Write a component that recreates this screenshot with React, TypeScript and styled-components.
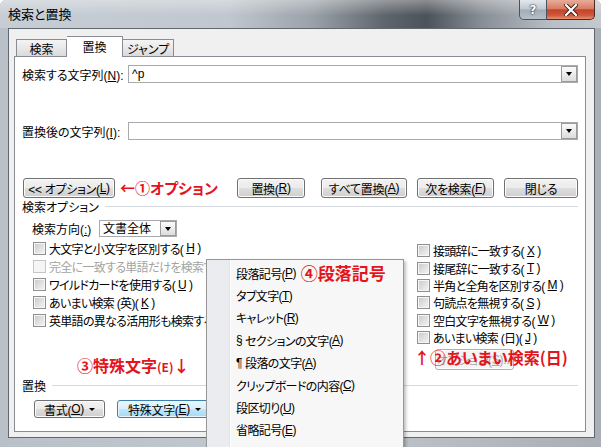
import React from "react";
import styled, { createGlobalStyle, css } from "styled-components";

const GlobalStyle = createGlobalStyle`
  html, body {
    margin: 0;
    padding: 0;
    background: #ffffff;
  }
  body {
    font-family: "Liberation Sans", "Noto Sans CJK JP", sans-serif;
    font-size: 12px;
    color: #000;
    font-feature-settings: "palt";
  }
  * {
    box-sizing: border-box;
  }
`;

const RED = "#e3141c";

const Window = styled.div`
  position: relative;
  width: 601px;
  height: 447px;
  overflow: hidden;
  display: flex;
  flex-direction: column;
  border-radius: 6px 6px 0 0;
  background: linear-gradient(90deg, #b9c0c7 0%, #c3c9cf 50%, #a9afb5 100%);
`;

const TitleBar = styled.div`
  height: 28px;
  flex: none;
  display: flex;
  align-items: flex-start;
  background:
    linear-gradient(180deg, rgba(255, 255, 255, 0.35) 0%, rgba(255, 255, 255, 0) 55%),
    linear-gradient(90deg, #c6cdd4 0%, #c0c7ce 38%, #9aa1a8 52%, #5f656c 64%, #4c5259 71%, #878d94 80%, #b9bfc5 92%, #c4c9ce 100%);
`;

const Title = styled.div`
  margin: 6px 0 0 8px;
  font-family: "Noto Sans CJK JP", sans-serif;
  font-size: 13px;
  line-height: 16px;
`;

const CaptionButtons = styled.div`
  margin-left: auto;
  margin-right: 6px;
  display: flex;
  height: 20px;
`;

const CaptionButton = styled.div<{ $close?: boolean }>`
  width: ${(p) => (p.$close ? 48 : 28)}px;
  height: 20px;
  display: flex;
  align-items: center;
  justify-content: center;
  border: 1px solid ${(p) => (p.$close ? "#4e2a22" : "#4a535c")};
  border-top: none;
  ${(p) =>
    p.$close
      ? css`
          border-radius: 0 0 5px 0;
          border-left: none;
          background: linear-gradient(180deg, #e8ab9c 0%, #d97c64 45%, #c4432a 52%, #cf563c 80%, #e3936f 100%);
        `
      : css`
          border-radius: 0 0 0 5px;
          background: linear-gradient(180deg, #e2e7ec 0%, #bfc7cf 48%, #a2acb6 52%, #b6c0ca 100%);
        `}
  color: #fff;
  font-family: "DejaVu Sans", sans-serif;
  font-weight: bold;
  font-size: 12px;
  text-shadow: 0 0 2px #222, 0 0 1px #222;
`;

const FrameBody = styled.div`
  flex: 1;
  display: flex;
  padding: 0 6px 9px 8px;
`;

const Client = styled.div`
  flex: 1;
  display: flex;
  flex-direction: column;
  background: #f0f0f0;
  border: 1px solid #5f6871;
  padding: 0 8px 5px 5px;
`;

const TabsRow = styled.div`
  height: 27px;
  flex: none;
  display: flex;
  align-items: flex-end;
  padding-left: 2px;
  position: relative;
  z-index: 1;
`;

const Tab = styled.div<{ $active?: boolean; $w: number }>`
  width: ${(p) => p.$w}px;
  display: flex;
  align-items: center;
  justify-content: center;
  border: 1px solid #898c95;
  border-bottom: none;
  ${(p) =>
    p.$active
      ? css`
          height: 21px;
          margin-bottom: -1px;
          background: #ffffff;
          padding-bottom: 2px;
        `
      : css`
          height: 17px;
          background: linear-gradient(180deg, #f4f4f4 0%, #e8e8e8 50%, #dadada 100%);
          padding-top: 1px;
        `}
  & + & {
    border-left: none;
  }
`;

const Panel = styled.div`
  flex: 1;
  display: flex;
  flex-direction: column;
  background: #ffffff;
  border: 1px solid #898c95;
  padding: 0 7px;
`;

const FieldRow = styled.div<{ $top: number }>`
  display: flex;
  align-items: center;
  margin-top: ${(p) => p.$top}px;
  height: 18px;
`;

const FieldLabel = styled.div<{ $w: number; $indent?: number }>`
  width: ${(p) => p.$w}px;
  margin-left: ${(p) => p.$indent ?? 0}px;
  flex: none;
  white-space: nowrap;
`;

const Combo = styled.div<{ $w?: number }>`
  ${(p) => (p.$w ? `width: ${p.$w}px; flex: none;` : "flex: 1;")}
  height: 100%;
  display: flex;
  align-items: center;
  border: 1px solid #a7abb0;
  background: #fff;
  padding: 0 0 0 3px;
  line-height: 14px;
`;

const ComboText = styled.span`
  flex: 1;
  white-space: nowrap;
`;

const DropArrow = styled.div`
  width: 16px;
  height: 100%;
  flex: none;
  display: flex;
  align-items: center;
  justify-content: center;
  border: 1px solid #9b9b9b;
  background: linear-gradient(180deg, #fbfbfb 0%, #ececec 50%, #dcdcdc 100%);
  &::after {
    content: "";
    border-left: 3.5px solid transparent;
    border-right: 3.5px solid transparent;
    border-top: 4px solid #000;
  }
`;

const ButtonRow = styled.div`
  display: flex;
  align-items: center;
  margin-top: 38px;
  height: 20px;
`;

const Button = styled.div<{ $w: number; $h?: number; $ml?: number; $hot?: boolean; $disabled?: boolean }>`
  width: ${(p) => p.$w}px;
  height: ${(p) => p.$h ?? 20}px;
  margin-left: ${(p) => (p.$ml === undefined ? 0 : p.$ml)}px;
  flex: none;
  display: flex;
  align-items: center;
  justify-content: center;
  white-space: nowrap;
  letter-spacing: -0.3px;
  border-radius: 3px;
  border: 1px solid ${(p) => (p.$hot ? "#3c7fb1" : p.$disabled ? "#adb2b5" : "#707070")};
  box-shadow: inset 0 0 0 1px ${(p) => (p.$hot ? "#eaf6fd" : "#fcfcfc")};
  color: ${(p) => (p.$disabled ? "#a8a8a8" : "#000")};
  background: ${(p) =>
    p.$hot
      ? "linear-gradient(180deg, #eaf6fd 0%, #d9f0fc 50%, #bee6fd 51%, #a7d9f5 100%)"
      : p.$disabled
      ? "#f4f4f4"
      : "linear-gradient(180deg, #f2f2f2 0%, #ebebeb 50%, #dddddd 51%, #cfcfcf 100%)"};
`;

const SplitMark = styled.span`
  margin-left: 5px;
  border-left: 3px solid transparent;
  border-right: 3px solid transparent;
  border-top: 3px solid #000;
`;

const Note = styled.span<{ $size: number; $ml?: number }>`
  color: ${RED};
  font-family: "Noto Sans CJK JP", sans-serif;
  font-weight: bold;
  font-size: ${(p) => p.$size}px;
  line-height: 20px;
  letter-spacing: 0;
  white-space: nowrap;
  margin-left: ${(p) => p.$ml ?? 0}px;
`;

const SmallNote = styled.span`
  font-size: 12px;
`;

const GroupHeader = styled.div<{ $top: number }>`
  display: flex;
  align-items: center;
  height: 14px;
  margin-top: ${(p) => p.$top}px;
  white-space: nowrap;
  &::after {
    content: "";
    flex: 1;
    height: 1px;
    margin-left: 6px;
    background: #d5dbe0;
  }
`;

const Columns = styled.div`
  display: flex;
  height: 137px;
  margin-top: 2px;
`;

const LeftCol = styled.div`
  width: 384px;
  margin-left: 11px;
  display: flex;
  flex-direction: column;
`;

const RightCol = styled.div`
  position: relative;
  flex: 1;
  padding-top: 3px;
  display: flex;
  flex-direction: column;
`;

const CheckRow = styled.div<{ $h: number; $disabled?: boolean }>`
  height: ${(p) => p.$h}px;
  display: flex;
  align-items: center;
  gap: 3px;
  white-space: nowrap;
  letter-spacing: -0.7px;
  color: ${(p) => (p.$disabled ? "#a3a3a3" : "#000")};
`;

const Box = styled.span<{ $disabled?: boolean }>`
  width: 13px;
  height: 13px;
  flex: none;
  border: 1px solid ${(p) => (p.$disabled ? "#c6c6c6" : "#8e8f8f")};
  box-shadow: inset 0 0 0 1px #f6f6f6;
  background: ${(p) =>
    p.$disabled ? "#f5f5f5" : "linear-gradient(135deg, #c9c9c9 0%, #dfdfdf 50%, #f5f5f5 100%)"};
`;

const NoteLine = styled.div`
  margin-top: 26px;
  margin-left: 44px;
  height: 20px;
  display: flex;
  align-items: center;
`;

const FloatingNote = styled.div`
  position: absolute;
  left: -3px;
  top: 108px;
  height: 20px;
  display: flex;
  align-items: center;
`;

const BottomRow = styled.div`
  display: flex;
  align-items: center;
  margin-top: 8px;
`;

const Menu = styled.div`
  position: absolute;
  left: 206px;
  top: 259px;
  width: 198px;
  height: 200px;
  padding: 2px 2px 0 2px;
  border: 1px solid #979797;
  background: linear-gradient(90deg, #eaecef 0px, #eaecef 22px, #e1e3e5 22px, #e1e3e5 23px, #ffffff 23px, #ffffff 24px, #f7f7f7 24px);
  box-shadow: 2px 2px 3px rgba(0, 0, 0, 0.25);
  z-index: 5;
`;

const MenuItem = styled.div`
  height: 22.4px;
  display: flex;
  align-items: center;
  padding-left: 27px;
  white-space: nowrap;
  letter-spacing: -0.6px;
`;

const Glyph = styled.span`
  display: inline-block;
  width: 9px;
`;

type Check = { label: React.ReactNode; disabled?: boolean };

const leftChecks: Check[] = [
  { label: <>大文字と小文字を区別する(<u>H</u>)</> },
  { label: <>完全に一致する単語だけを検索する(<u>Y</u>)</>, disabled: true },
  { label: <>ワイルドカードを使用する(<u>U</u>)</> },
  { label: <>あいまい検索 (英)(<u>K</u>)</> },
  { label: <>英単語の異なる活用形も検索する(<u>W</u>)</> },
];

const rightChecks: Check[] = [
  { label: <>接頭辞に一致する(<u>X</u>)</> },
  { label: <>接尾辞に一致する(<u>T</u>)</> },
  { label: <>半角と全角を区別する(<u>M</u>)</> },
  { label: <>句読点を無視する(<u>S</u>)</> },
  { label: <>空白文字を無視する(<u>W</u>)</> },
  { label: <>あいまい検索 (日)(<u>J</u>)</> },
];

const menuItems: React.ReactNode[] = [
  <>
    段落記号(<u>P</u>)<Note $size={17} $ml={5}>④段落記号</Note>
  </>,
  <>タブ文字(<u>T</u>)</>,
  <>キャレット(<u>R</u>)</>,
  <>
    <Glyph>§</Glyph>セクションの文字(<u>A</u>)
  </>,
  <>
    <Glyph>¶</Glyph>段落の文字(<u>A</u>)
  </>,
  <>クリップボードの内容(<u>C</u>)</>,
  <>段区切り(<u>U</u>)</>,
  <>省略記号(<u>E</u>)</>,
];

const CloseIcon = () => (
  <svg width="14" height="12" viewBox="0 0 14 12">
    <path d="M2 1 L12 11 M12 1 L2 11" stroke="#3a1a14" strokeWidth="4" strokeLinecap="square" />
    <path d="M2 1 L12 11 M12 1 L2 11" stroke="#ffffff" strokeWidth="2.2" strokeLinecap="square" />
  </svg>
);

const App: React.FC = () => {
  return (
    <>
      <GlobalStyle />
      <Window>
        <TitleBar>
          <Title>検索と置換</Title>
          <CaptionButtons>
            <CaptionButton>?</CaptionButton>
            <CaptionButton $close>
              <CloseIcon />
            </CaptionButton>
          </CaptionButtons>
        </TitleBar>
        <FrameBody>
          <Client>
            <TabsRow>
              <Tab $w={51}>検索</Tab>
              <Tab $w={56} $active>
                置換
              </Tab>
              <Tab $w={51}>ジャンプ</Tab>
            </TabsRow>
            <Panel>
              <FieldRow $top={8}>
                <FieldLabel $w={106}>
                  検索する文字列(<u>N</u>):
                </FieldLabel>
                <Combo>
                  <ComboText>^p</ComboText>
                  <DropArrow />
                </Combo>
              </FieldRow>
              <FieldRow $top={39}>
                <FieldLabel $w={106}>
                  置換後の文字列(<u>I</u>):
                </FieldLabel>
                <Combo>
                  <ComboText />
                  <DropArrow />
                </Combo>
              </FieldRow>

              <ButtonRow>
                <Button $w={92} $ml={1}>
                  &lt;&lt; オプション(<u>L</u>)
                </Button>
                <Note $size={15} $ml={5}>
                  ←①オプション
                </Note>
                <Button $w={68} style={{ marginLeft: "auto" }}>
                  置換(<u>R</u>)
                </Button>
                <Button $w={86} $ml={16}>
                  すべて置換(<u>A</u>)
                </Button>
                <Button $w={77} $ml={10}>
                  次を検索(<u>F</u>)
                </Button>
                <Button $w={74} $ml={10}>
                  閉じる
                </Button>
              </ButtonRow>

              <GroupHeader $top={1}>検索オプション</GroupHeader>

              <FieldRow $top={7} style={{ height: 17 }}>
                <FieldLabel $w={67} $indent={10}>
                  検索方向(<u>:</u>)
                </FieldLabel>
                <Combo $w={78}>
                  <ComboText>文書全体</ComboText>
                  <DropArrow />
                </Combo>
              </FieldRow>

              <Columns>
                <LeftCol>
                  {leftChecks.map((c, i) => (
                    <CheckRow key={i} $h={18.5} $disabled={c.disabled}>
                      <Box $disabled={c.disabled} />
                      {c.label}
                    </CheckRow>
                  ))}
                  <NoteLine>
                    <Note $size={16}>
                      ③特殊文字<SmallNote>(E)</SmallNote>↓
                    </Note>
                  </NoteLine>
                </LeftCol>
                <RightCol>
                  {rightChecks.map((c, i) => (
                    <CheckRow key={i} $h={17.4}>
                      <Box />
                      {c.label}
                    </CheckRow>
                  ))}
                  <Button $w={79} $h={21} $ml={18} $disabled style={{ marginTop: 3 }}>
                    オプション(<u>S</u>)...
                  </Button>
                  <FloatingNote>
                    <Note $size={16}>↑②あいまい検索(日)</Note>
                  </FloatingNote>
                </RightCol>
              </Columns>

              <GroupHeader $top={2}>置換</GroupHeader>

              <BottomRow>
                <Button $w={71} $h={18} $ml={12}>
                  書式(<u>O</u>)
                  <SplitMark />
                </Button>
                <Button $w={95} $h={18} $ml={12} $hot>
                  特殊文字(<u>E</u>)
                  <SplitMark />
                </Button>
              </BottomRow>
            </Panel>
          </Client>
        </FrameBody>

        <Menu>
          {menuItems.map((m, i) => (
            <MenuItem key={i}>{m}</MenuItem>
          ))}
        </Menu>
      </Window>
    </>
  );
};

export default App;
